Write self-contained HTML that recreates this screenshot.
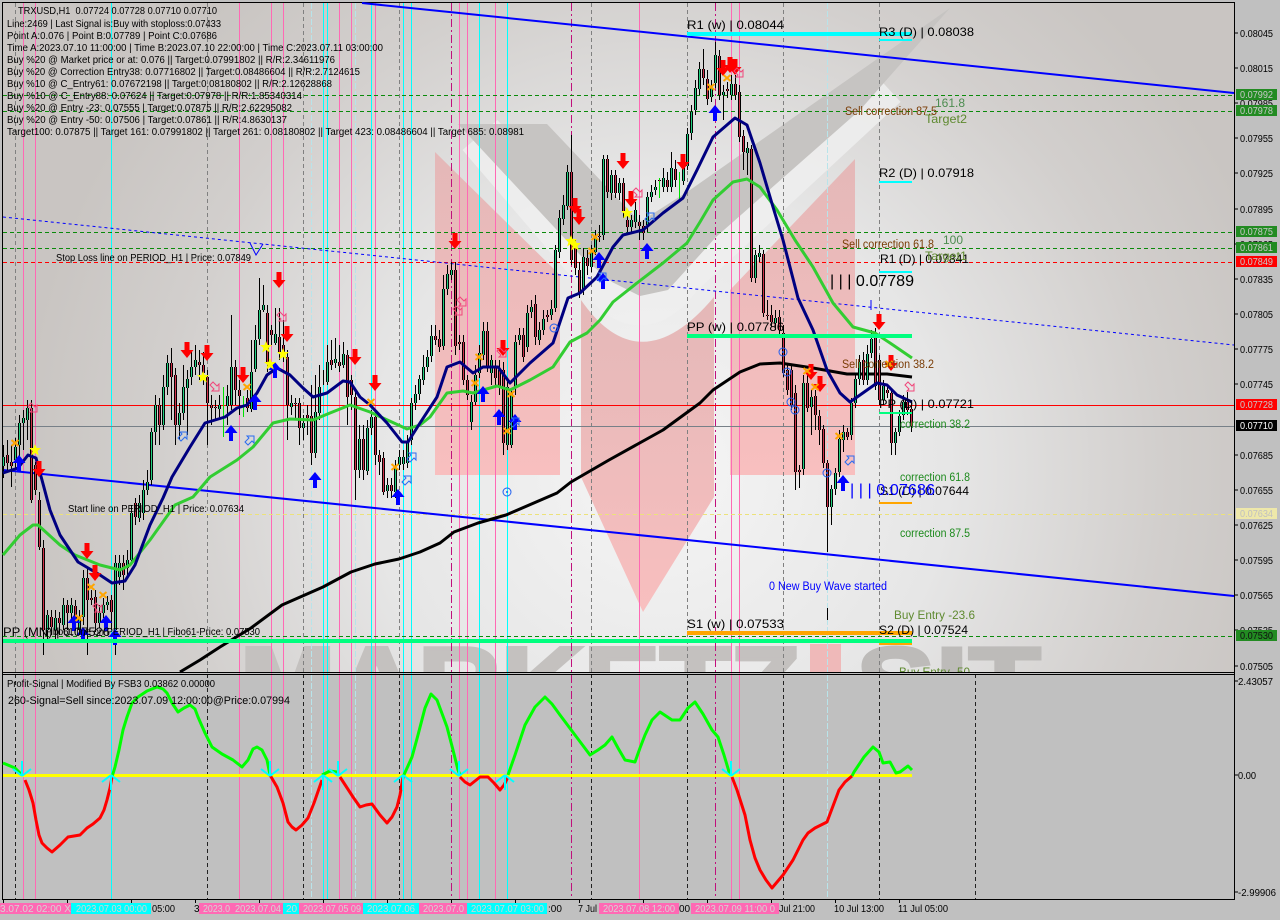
<!DOCTYPE html>
<html>
<head>
<meta charset="utf-8">
<title>TRXUSD,H1</title>
<style>
html,body{margin:0;padding:0;background:#c0c0c0;width:1280px;height:920px;overflow:hidden}
svg{display:block;font-family:"Liberation Sans",sans-serif}
text{white-space:pre}
</style>
</head>
<body>
<svg width="1280" height="920" viewBox="0 0 1280 920" xmlns="http://www.w3.org/2000/svg">
<defs>
<radialGradient id="bg" gradientUnits="userSpaceOnUse" cx="660" cy="470" r="640">
<stop offset="0" stop-color="#f5f5f5"/><stop offset=".45" stop-color="#e6e6e6"/><stop offset=".78" stop-color="#d2cfcd"/><stop offset="1" stop-color="#c9c5c2"/>
</radialGradient>
<linearGradient id="pk" x1="0" y1="0" x2="0" y2="1"><stop offset="0" stop-color="#e4b8b8"/><stop offset="1" stop-color="#f8bfbf"/></linearGradient>
<clipPath id="m"><rect x="3" y="3" width="1231" height="669"/></clipPath>
<polygon id="rd" points="-2.5,-8 2.5,-8 2.5,0 6.5,0 0,8 -6.5,0 -2.5,0" fill="#f00"/>
<polygon id="bu" points="-2,8 2,8 2,0 6.5,0 0,-8 -6.5,0 -2,0" fill="#00f"/>
<polygon id="st" points="0,-6 1.6,-2 6,-2 2.5,1 3.8,5.5 0,3 -3.8,5.5 -2.5,1 -6,-2 -1.6,-2" fill="#ff0"/>
<path id="ox" d="M-3.5 -3L3.5 3M3.5 -3L-3.5 3" stroke="#ffa500" stroke-width="2" fill="none"/>
<polygon id="hp" points="-5,-2 -2,-5 2,-1 4,-3 4,4 -3,4 -1,2" fill="none" stroke="#f0467a"/>
<polygon id="hb" points="-5,2 -2,5 2,1 4,3 4,-4 -3,-4 -1,-2" fill="none" stroke="#2a6cf0"/>
<g id="ci"><circle r="4" fill="none" stroke="#1f5ff0"/><circle r="1" fill="#1f5ff0"/></g>
<path id="cd" d="M0 0V-15M0 0L-9 -7M0 0L9 -7" stroke="#00ffff" stroke-width="2" fill="none"/>
<path id="cu" d="M0 0V15M0 0L-9 7M0 0L9 7" stroke="#00ffff" stroke-width="2" fill="none"/>
<path id="gb" fill="none" d="M3 457V466M15 447V460M19 423V445M23 418V423M27 408V420M47 615V630M55 618V630M63 605V625M71 605V613M79 617V630M83 578V617M99 613V623M103 605V613M107 602V605M115 563V630M119 563V577M127 560V568M131 513V560M139 503V518M143 490V513M147 482V490M151 432V480M155 405V432M163 387V425M167 363V387M179 413V425M183 387V413M187 379V388M191 367V377M195 360V367M219 405V409M227 396V406M231 367V405M251 372V409M255 340V369M259 310V339M263 305V310M275 334V343M291 403V407M303 423V428M315 412V453M319 387V413M327 362V382M335 359V363M343 354V365M359 439V470M367 428V471M371 417V428M387 485V491M395 468V492M399 457V465M403 457V464M407 443V463M411 403V440M415 394V403M419 379V394M423 367V380M427 357V367M431 336V356M443 289V346M447 274V289M451 270V275M471 402V422M475 375V402M479 353V373M483 331V355M491 360V373M507 387V445M511 393V445M515 342V387M519 335V340M527 313V347M531 307V312M539 330V340M543 319V330M551 309V315M555 250V308M559 218V252M563 205V219M567 172V206M583 257V290M591 252V267M595 237V252M603 159V235M611 175V193M619 183V193M631 220V227M635 210V222M647 197V225M651 192V197M655 187V190M663 178V187M671 168V187M683 167V181M687 134V166M691 112V133M695 88V110M699 69V89M711 88V97M715 55V83M723 92V95M731 84V95M747 148V153M755 255V278M759 253V257M775 318V323M803 383V469M811 397V407M831 489V507M835 473V489M839 439V472M843 432V440M851 403V435M855 379V403M859 362V379M867 354V380M871 339V353M883 386V400M895 432V443M899 416V432M903 402V415"/>
<path id="rb" fill="none" d="M7 455V463M11 462V466M31 408V500M35 465V490M39 500V547M43 548V630M51 617V627M59 618V623M67 605V613M75 606V620M87 578V600M91 598V600M95 597V623M111 600V612M123 563V575M135 503V517M159 405V425M171 363V377M175 375V425M199 362V365M203 365V373M207 377V403M211 405V408M215 407V408M235 367V390M239 390V396M247 398V408M267 313V363M271 330V335M279 337V352M283 345V355M287 357V405M295 403V404M299 403V428M307 415V418M311 416V453M331 360V365M339 362V366M347 355V397M351 380V395M355 397V470M363 439V470M375 417V455M379 455V462M383 458V492M391 485V491M435 336V340M439 339V347M455 270V346M459 342V344M463 342V380M467 380V395M487 331V367M495 368V378M499 370V387M503 370V443M523 335V357M535 304V337M547 315V317M571 172V260M575 247V268M579 270V293M587 258V266M599 236V237M607 159V192M615 175V193M623 183V212M627 220V227M639 222V226M643 226V233M659 180V181M667 180V187M675 169V180M703 69V78M707 79V99M719 56V95M727 89V91M735 84V95M739 92V137M743 136V152M751 149V278M763 254V313M767 315V316M771 315V322M779 317V330M783 333V373M787 370V390M791 370V405M795 393V472M799 470V472M807 383V408M815 396V415M819 416V430M823 429V463M827 463V507M847 432V437M863 360V380M875 338V386M879 360V400M887 390V393M891 393V443M907 402V410M911 409V426"/>
</defs>

<rect width="1280" height="920" fill="#c0c0c0"/>
<rect x="3" y="3" width="1231" height="669" fill="url(#bg)"/>

<!-- watermark -->
<g clip-path="url(#m)">
<path d="M480 135L600 275Q640 330 680 275L885 85" fill="none" stroke="#efefef" stroke-width="46" opacity=".85"/>
<polygon points="458,124 547,124 640,222 690,190 950,8 860,110 716,237 668,290 640,296 612,282 582,257" fill="#c6c4c2"/>
<polygon points="435,152 560,275 560,475 435,475" fill="url(#pk)"/>
<polygon points="855,159 730,290 730,475 855,475" fill="url(#pk)"/>
<path d="M581 300Q640 385 714 297V497L643 612L581 477Z" fill="url(#pk)"/>
<text x="240" y="717" font-size="100" font-weight="bold" fill="#c4c1bf" stroke="#c4c1bf" stroke-width="4" textLength="560" lengthAdjust="spacingAndGlyphs">MARKETZ</text>
<rect x="810" y="644" width="31" height="30" fill="#efb9b9"/>
<text x="856" y="717" font-size="100" fill="#bdbbb9" stroke="#bdbbb9" stroke-width="3" font-weight="bold" textLength="185" lengthAdjust="spacingAndGlyphs">SIT</text>
</g>

<!-- panel -->
<rect x="3" y="674" width="1231" height="225" fill="#c0c0c0"/>

<!-- vertical lines -->
<g shape-rendering="crispEdges" fill="none">
<path stroke="#808080" stroke-dasharray="4 3" d="M15.5 3V672M207.5 3V672M303.5 3V672M399.5 3V672M591.5 3V672M687.5 3V672M783.5 3V672M879.5 3V672"/>
<path stroke="#222" stroke-dasharray="4 3" d="M15.5 674V899M207.5 674V899M303.5 674V899M399.5 674V899M591.5 674V899M687.5 674V899M783.5 674V899M879.5 674V899M975.5 674V899"/>
<path stroke="#b8e4ea" stroke-dasharray="6 2" d="M311.5 3V899M355.5 3V899M827.5 3V899"/>
<path stroke="#c0107c" stroke-dasharray="8 3 2 3" d="M451.5 3V899M571.5 3V899M715.5 3V899"/>
<path stroke="#ff69b4" d="M23.5 3V899M35.5 3V899M239.5 3V899M271.5 3V899M283.5 3V899M339.5 3V899M351.5 3V899M375.5 3V899M459.5 3V899M467.5 3V899M495.5 3V899M639.5 3V899M731.5 3V899M739.5 3V899"/>
<path stroke="#00ffff" d="M111.5 3V899M323.5 3V899M327.5 3V899M371.5 3V899M403.5 3V899M411.5 3V899M479.5 3V899M507.5 3V899"/>
</g>

<!-- frames -->
<g shape-rendering="crispEdges">
<rect x="2" y="2" width="1233" height="1" fill="#000"/>
<rect x="2" y="2" width="1" height="897" fill="#000"/>
<rect x="1234" y="2" width="1" height="898" fill="#000"/>
<rect x="2" y="672" width="1233" height="1" fill="#000"/>
<rect x="2" y="674" width="1233" height="1" fill="#000"/>
<rect x="2" y="899" width="1233" height="1" fill="#000"/>
</g>

<!-- horizontal lines -->
<g shape-rendering="crispEdges" fill="none">
<path stroke="#0a8a0a" stroke-dasharray="4 3" d="M3 95.5H1234M3 111.5H1234M3 232.5H1234M3 248.5H1234M3 636.5H1234"/>
<path stroke="#f00" stroke-dasharray="4 3" d="M3 262.5H1234"/>
<path stroke="#f00" d="M3 405.5H1234"/>
<path stroke="#778088" d="M3 426.5H1234"/>
<path stroke="#ece27a" stroke-dasharray="4 3" d="M3 514.5H1234"/>
</g>

<!-- channels -->
<g fill="none" stroke="#0000ff">
<path stroke-width="2" d="M362 3L1234 93"/>
<path stroke-width="2" d="M3 470L1234 596"/>
<path stroke-width="1" stroke-dasharray="3 3" d="M3 217L1234 345"/>
<path stroke-width="1" d="M250 243L256 255L263 244M871 300V310"/>
</g>

<!-- black MA -->
<path fill="none" stroke="#000" stroke-width="3" stroke-linejoin="round" d="M180 672L200 660L220 647L251 628L282 605L323 587L351 572L375 564L399 559L420 552L440 543L454 532L478 523L506 515L557 493L571 482L609 460L663 430L700 403L713 390L740 372L760 364L780 363L813 368L847 374L887 374L912 377"/>

<!-- candles -->
<g fill="none" shape-rendering="crispEdges">
<path stroke="#000" d="M3.5 445V478M7.5 440V470M11.5 445V487M15.5 438V470M19.5 415V465M23.5 410V450M27.5 400V440M31.5 400V503M35.5 462V495M39.5 492V550M43.5 540V655M47.5 610V640M51.5 610V635M55.5 610V640M59.5 612V635M63.5 598V630M67.5 600V630M71.5 598V620M75.5 600V630M79.5 610V632M83.5 570V625M87.5 568V655M91.5 590V605M95.5 590V632M99.5 605V628M103.5 598V618M107.5 596V610M111.5 595V630M115.5 555V655M119.5 555V585M123.5 555V590M127.5 550V575M131.5 505V565M135.5 498V525M139.5 495V522M143.5 480V520M147.5 470V495M151.5 428V485M155.5 395V445M159.5 398V445M163.5 375V430M167.5 355V395M171.5 348V420M175.5 368V445M179.5 403V440M183.5 365V420M187.5 370V435M191.5 352V385M195.5 345V375M199.5 350V380M203.5 352V385M207.5 370V445M211.5 395V425M215.5 400V420M219.5 395V420M227.5 385V425M231.5 315V410M235.5 360V405M239.5 380V415M247.5 390V412M251.5 340V412M255.5 325V372M259.5 278V345M263.5 285V312M267.5 305V372M271.5 325V345M275.5 308V345M279.5 308V360M283.5 320V362M287.5 350V440M291.5 395V415M295.5 398V420M299.5 398V445M303.5 415V440M307.5 405V435M311.5 385V465M315.5 375V458M319.5 365V420M323.5 370V385M327.5 345V385M331.5 340V370M335.5 338V368M339.5 345V372M343.5 342V368M347.5 350V425M351.5 375V410M355.5 390V500M359.5 425V478M363.5 425V480M367.5 420V475M371.5 410V435M375.5 410V465M379.5 450V475M383.5 452V495M387.5 478V498M391.5 478V498M395.5 460V498M399.5 450V470M403.5 450V470M407.5 435V468M411.5 398V445M415.5 385V410M419.5 375V400M423.5 355V385M427.5 350V372M431.5 325V362M435.5 325V345M439.5 330V352M443.5 275V350M447.5 265V295M451.5 262V280M455.5 262V355M459.5 335V350M463.5 335V385M467.5 375V400M471.5 395V430M475.5 365V405M479.5 345V378M483.5 322V360M487.5 322V372M491.5 355V385M495.5 360V385M499.5 360V395M503.5 362V455M507.5 380V450M511.5 388V448M515.5 335V395M519.5 328V345M523.5 328V362M527.5 305V352M531.5 300V318M535.5 295V345M539.5 322V345M543.5 310V335M547.5 310V322M551.5 300V320M555.5 245V312M559.5 210V258M563.5 195V225M567.5 165V210M571.5 135V265M575.5 240V275M579.5 262V298M583.5 248V295M587.5 250V275M591.5 245V272M595.5 230V255M599.5 225V242M603.5 155V240M607.5 155V198M611.5 170V200M615.5 170V198M619.5 178V200M623.5 178V218M627.5 212V232M631.5 215V232M635.5 202V228M639.5 215V240M643.5 220V240M647.5 192V232M651.5 185V202M655.5 180V195M663.5 168V192M667.5 172V192M671.5 152V192M675.5 160V187M683.5 160V185M687.5 128V170M691.5 105V140M695.5 80V115M699.5 62V95M703.5 49V85M707.5 70V105M711.5 80V102M715.5 42V88M719.5 50V100M723.5 85V120M727.5 82V98M731.5 75V100M735.5 75V100M739.5 85V142M743.5 130V170M747.5 142V175M751.5 145V282M755.5 250V283M759.5 245V262M763.5 250V317M767.5 300V320M771.5 305V327M775.5 310V330M779.5 310V335M783.5 325V377M787.5 365V395M791.5 365V410M795.5 385V490M799.5 465V488M803.5 375V475M807.5 375V412M811.5 390V435M815.5 390V430M819.5 410V445M823.5 425V468M827.5 460V552M831.5 485V525M835.5 468V495M839.5 430V477M843.5 425V452M847.5 428V440M851.5 398V440M855.5 375V408M859.5 355V385M863.5 352V385M867.5 345V385M871.5 330V358M875.5 328V390M879.5 355V405M883.5 380V405M887.5 385V398M891.5 388V455M895.5 428V455M899.5 410V436M903.5 395V420M907.5 392V415M911.5 400V432M827.5 608V620"/>
<path stroke="#00e000" d="M223.5 387V437M243.5 396V417M659.5 178V198M679.5 172V200"/>
<use href="#gb" stroke="#000" stroke-width="3" transform="translate(.5 0)"/>
<use href="#rb" stroke="#000" stroke-width="3" transform="translate(.5 0)"/>
<use href="#gb" stroke="#20d080" stroke-width="1" transform="translate(.5 0)"/>
<use href="#rb" stroke="#d0304a" stroke-width="1" transform="translate(.5 0)"/>
</g>

<!-- MAs -->
<path fill="none" stroke="#32cd32" stroke-width="3" stroke-linejoin="round" d="M3 555L20 535L33 525L38 525L60 545L75 555L100 565L120 570L130 565L150 540L175 505L193 497L210 477L237 460L253 447L273 423L290 419L313 420L330 413L350 405L370 412L383 418L407 429L420 425L430 417L447 393L463 391L473 393L497 386L510 390L530 380L553 367L570 342L587 333L600 320L613 302L637 283L663 263L687 243L700 222L713 200L733 182L747 179L760 187L777 210L795 240L813 267L833 303L853 327L875 333L893 345L912 358"/>
<path fill="none" stroke="#000080" stroke-width="3" stroke-linejoin="round" d="M3 473L18 468L28 455L36 458L42 480L50 510L60 535L78 562L100 575L112 583L125 581L135 565L150 525L163 498L172 477L190 447L205 423L225 417L237 408L247 405L257 393L267 375L277 368L290 375L303 388L313 397L327 393L343 381L350 382L360 397L370 405L387 423L402 442L408 442L420 423L437 397L447 367L460 362L473 373L483 367L498 367L510 383L530 363L553 343L568 298L580 293L597 277L613 247L623 235L643 230L663 213L683 198L697 170L713 137L735 118L747 125L760 163L773 207L783 240L798 298L813 330L827 370L840 393L850 402L860 395L877 383L887 385L897 395L912 402"/>

<!-- markers -->
<g>
<use href="#rd" x="39" y="469"/><use href="#rd" x="87" y="551"/><use href="#rd" x="95" y="573"/><use href="#rd" x="187" y="350"/><use href="#rd" x="207" y="353"/><use href="#rd" x="243" y="375"/><use href="#rd" x="279" y="280"/><use href="#rd" x="287" y="334"/><use href="#rd" x="355" y="357"/><use href="#rd" x="375" y="383"/><use href="#rd" x="455" y="241"/><use href="#rd" x="503" y="348"/><use href="#rd" x="575" y="206"/><use href="#rd" x="579" y="217"/><use href="#rd" x="623" y="161"/><use href="#rd" x="631" y="199"/><use href="#rd" x="683" y="162"/><use href="#rd" x="723" y="68"/><use href="#rd" x="730" y="65"/><use href="#rd" x="735" y="67"/><use href="#rd" x="811" y="372"/><use href="#rd" x="820" y="384"/><use href="#rd" x="879" y="322"/><use href="#rd" x="891" y="363"/>
<use href="#bu" x="19" y="463"/><use href="#bu" x="74" y="623"/><use href="#bu" x="83" y="635"/><use href="#bu" x="106" y="623"/><use href="#bu" x="115" y="637"/><use href="#bu" x="231" y="433"/><use href="#bu" x="255" y="402"/><use href="#bu" x="275" y="370"/><use href="#bu" x="315" y="480"/><use href="#bu" x="398" y="497"/><use href="#bu" x="483" y="394"/><use href="#bu" x="499" y="417"/><use href="#bu" x="515" y="422"/><use href="#bu" x="599" y="260"/><use href="#bu" x="603" y="281"/><use href="#bu" x="647" y="251"/><use href="#bu" x="715" y="113"/><use href="#bu" x="843" y="483"/>
<use href="#st" x="35" y="450"/><use href="#st" x="203" y="377"/><use href="#st" x="266" y="347"/><use href="#st" x="270" y="364"/><use href="#st" x="283" y="354"/><use href="#st" x="571" y="241"/><use href="#st" x="575" y="245"/><use href="#st" x="627" y="213"/>
<use href="#ox" x="15" y="443"/><use href="#ox" x="91" y="587"/><use href="#ox" x="103" y="595"/><use href="#ox" x="79" y="618"/><use href="#ox" x="247" y="387"/><use href="#ox" x="371" y="402"/><use href="#ox" x="395" y="467"/><use href="#ox" x="479" y="357"/><use href="#ox" x="475" y="383"/><use href="#ox" x="511" y="394"/><use href="#ox" x="507" y="431"/><use href="#ox" x="595" y="237"/><use href="#ox" x="592" y="251"/><use href="#ox" x="711" y="87"/><use href="#ox" x="727" y="78"/><use href="#ox" x="807" y="371"/><use href="#ox" x="815" y="387"/><use href="#ox" x="839" y="436"/><use href="#ox" x="889" y="364"/>
<use href="#hp" x="33" y="408"/><use href="#hp" x="98" y="608"/><use href="#hp" x="215" y="387"/><use href="#hp" x="282" y="317"/><use href="#hp" x="462" y="302"/><use href="#hp" x="458" y="311"/><use href="#hp" x="502" y="353"/><use href="#hp" x="638" y="193"/><use href="#hp" x="739" y="73"/><use href="#hp" x="910" y="387"/>
<use href="#hb" x="183" y="436"/><use href="#hb" x="250" y="440"/><use href="#hb" x="407" y="480"/><use href="#hb" x="412" y="457"/><use href="#hb" x="650" y="217"/><use href="#hb" x="602" y="277"/><use href="#hb" x="515" y="422"/><use href="#hb" x="850" y="460"/>
<use href="#ci" x="554" y="328"/><use href="#ci" x="783" y="352"/><use href="#ci" x="787" y="372"/><use href="#ci" x="791" y="402"/><use href="#ci" x="795" y="410"/><use href="#ci" x="827" y="473"/><use href="#ci" x="507" y="492"/>
</g>

<!-- level bars -->
<g shape-rendering="crispEdges">
<rect x="687" y="32" width="225" height="4" fill="#00ffff"/>
<rect x="879" y="39" width="33" height="2" fill="#00ffff"/>
<rect x="879" y="181" width="33" height="2" fill="#00ffff"/>
<rect x="879" y="271" width="33" height="2" fill="#00ffff"/>
<rect x="687" y="334" width="225" height="4" fill="#00ff7f"/>
<rect x="879" y="412" width="33" height="2" fill="#00ff7f"/>
<rect x="879" y="502" width="33" height="2" fill="#ffa500"/>
<rect x="687" y="631" width="225" height="4" fill="#ffa500"/>
<rect x="879" y="643" width="33" height="2" fill="#ffa500"/>
<rect x="3" y="639" width="909" height="4" fill="#00ff7f"/>
</g>

<!-- top info text -->
<g font-size="10" fill="#000">
<text x="18" y="14" textLength="199" lengthAdjust="spacingAndGlyphs">TRXUSD,H1  0.07724 0.07728 0.07710 0.07710</text>
<text x="7" y="27" textLength="214" lengthAdjust="spacingAndGlyphs">Line:2469 | Last Signal is:Buy with stoploss:0.07433</text>
<text x="7" y="39" textLength="210" lengthAdjust="spacingAndGlyphs">Point A:0.076 | Point B:0.07789 | Point C:0.07686</text>
<text x="7" y="51" textLength="376" lengthAdjust="spacingAndGlyphs">Time A:2023.07.10 11:00:00 | Time B:2023.07.10 22:00:00 | Time C:2023.07.11 03:00:00</text>
<text x="7" y="63" textLength="328" lengthAdjust="spacingAndGlyphs">Buy %20 @ Market price or at: 0.076 || Target:0.07991802 || R/R:2.34611976</text>
<text x="7" y="75" textLength="353" lengthAdjust="spacingAndGlyphs">Buy %20 @ Correction Entry38: 0.07716802 || Target:0.08486604 || R/R:2.7124615</text>
<text x="7" y="87" textLength="325" lengthAdjust="spacingAndGlyphs">Buy %10 @ C_Entry61: 0.07672198 || Target:0.08180802 || R/R:2.12628868</text>
<text x="7" y="99" textLength="295" lengthAdjust="spacingAndGlyphs">Buy %10 @ C_Entry88: 0.07624 || Target:0.07978 || R/R:1.85340314</text>
<text x="7" y="111" textLength="285" lengthAdjust="spacingAndGlyphs">Buy %20 @ Entry -23: 0.07555 | Target:0.07875 || R/R:2.62295082</text>
<text x="7" y="123" textLength="280" lengthAdjust="spacingAndGlyphs">Buy %20 @ Entry -50: 0.07506 | Target:0.07861 || R/R:4.8630137</text>
<text x="7" y="135" textLength="517" lengthAdjust="spacingAndGlyphs">Target100: 0.07875 || Target 161: 0.07991802 || Target 261: 0.08180802 || Target 423: 0.08486604 || Target 685: 0.08981</text>
<text x="56" y="261" textLength="195" lengthAdjust="spacingAndGlyphs">Stop Loss line on PERIOD_H1 | Price: 0.07849</text>
<text x="68" y="512" textLength="176" lengthAdjust="spacingAndGlyphs">Start line on PERIOD_H1 | Price: 0.07634</text>
<text x="45" y="635" textLength="215" lengthAdjust="spacingAndGlyphs">Fibo61 line on PERIOD_H1 | Fibo61-Price: 0.07530</text>
</g>

<!-- chart labels -->
<g clip-path="url(#m)">
<g font-size="12" fill="#000">
<text x="3" y="636" textLength="107" lengthAdjust="spacingAndGlyphs">PP (MN) | 0.07526</text>
<text x="687" y="29" textLength="97" lengthAdjust="spacingAndGlyphs">R1 (w) | 0.08044</text>
<text x="879" y="36" textLength="95" lengthAdjust="spacingAndGlyphs">R3 (D) | 0.08038</text>
<text x="879" y="177" textLength="95" lengthAdjust="spacingAndGlyphs">R2 (D) | 0.07918</text>
<text x="880" y="263" textLength="89" lengthAdjust="spacingAndGlyphs">R1 (D) | 0.07841</text>
<text x="687" y="331" textLength="97" lengthAdjust="spacingAndGlyphs">PP (w) | 0.07786</text>
<text x="879" y="408" textLength="95" lengthAdjust="spacingAndGlyphs">PP (D) | 0.07721</text>
<text x="880" y="495" textLength="89" lengthAdjust="spacingAndGlyphs">S1 (D) | 0.07644</text>
<text x="687" y="628" textLength="97" lengthAdjust="spacingAndGlyphs">S1 (w) | 0.07533</text>
<text x="879" y="634" textLength="89" lengthAdjust="spacingAndGlyphs">S2 (D) | 0.07524</text>
</g>
<text x="830" y="286" font-size="16" fill="#000" textLength="84" lengthAdjust="spacingAndGlyphs">| | | 0.07789</text>
<text x="850" y="495" font-size="16" fill="#0000ff" textLength="85" lengthAdjust="spacingAndGlyphs">| | | 0.07686</text>
<g font-size="11.5" fill="#7a3c05">
<text x="845" y="115" textLength="92" lengthAdjust="spacingAndGlyphs">Sell correction 87.5</text>
<text x="842" y="248" textLength="92" lengthAdjust="spacingAndGlyphs">Sell correction 61.8</text>
<text x="842" y="368" textLength="92" lengthAdjust="spacingAndGlyphs">Sell correction 38.2</text>
</g>
<g font-size="12" fill="#4c8c50">
<text x="935" y="107" textLength="30" lengthAdjust="spacingAndGlyphs">161.8</text>
<text x="943" y="244" textLength="20" lengthAdjust="spacingAndGlyphs">100</text>
</g>
<g font-size="12" fill="#5f8a30">
<text x="925" y="123" textLength="42" lengthAdjust="spacingAndGlyphs">Target2</text>
<text x="925" y="260" textLength="42" lengthAdjust="spacingAndGlyphs">Target1</text>
<text x="894" y="619" textLength="81" lengthAdjust="spacingAndGlyphs">Buy Entry -23.6</text>
<text x="899" y="676" textLength="71" lengthAdjust="spacingAndGlyphs">Buy Entry -50</text>
</g>
<g font-size="11.5" fill="#1d8a1d">
<text x="900" y="428" textLength="70" lengthAdjust="spacingAndGlyphs">correction 38.2</text>
<text x="900" y="481" textLength="70" lengthAdjust="spacingAndGlyphs">correction 61.8</text>
<text x="900" y="537" textLength="70" lengthAdjust="spacingAndGlyphs">correction 87.5</text>
</g>
<text x="769" y="590" font-size="11.5" fill="#0000ff" textLength="118" lengthAdjust="spacingAndGlyphs">0 New Buy Wave started</text>
</g>

<!-- indicator -->
<rect x="3" y="774" width="909" height="3" fill="#ffff00"/>
<g fill="none" stroke-width="3" stroke-linejoin="round">
<g stroke="#00ff00">
<path d="M3 763L15 768L22 775"/>
<path d="M112 777L115 767L119 750L123 730L127 717L132 703L138 697L147 691L157 687L163 689L167 693L172 703L178 712L184 708L190 705L195 709L198 717L205 733L212 747L222 754L233 760L242 767L248 760L253 749L257 747L262 750L267 760L270 775"/>
<path d="M322 775L330 771L337 772"/>
<path d="M403 777L412 757L418 735L425 708L431 694L437 700L447 727L453 750L458 770L460 775"/>
<path d="M508 775L515 755L525 725L535 707L545 697L552 704L560 715L575 735L590 755L598 750L605 745L612 737L618 748L625 760L635 762L640 748L645 735L652 720L660 712L672 720L680 720L688 708L695 702L703 714L712 730L718 737L724 755L730 775"/>
<path d="M852 776L854 772L864 757L873 747L879 752L883 763L890 762L896 773L900 772L908 766L912 770"/>
</g>
<g stroke="#ff0000">
<path d="M25 780L29 790L33 803L36 820L39 835L42 843L47 848L52 852L60 845L68 837L74 836L80 835L87 828L93 824L100 818L104 810L107 800L110 788L112 777"/>
<path d="M270 775L277 787L283 803L288 822L292 827L296 830L302 825L308 818L314 803L322 780"/>
<path d="M340 777L353 797L360 807L366 805L372 804L380 815L387 823L392 817L397 807L400 795L403 777"/>
<path d="M460 777L465 782L470 785L475 781L480 777L488 777L494 783L500 790L504 785L508 777"/>
<path d="M732 777L737 790L745 815L750 840L755 858L760 870L766 880L772 888L783 875L793 860L798 850L803 840L808 833L815 828L827 822L833 806L839 790L845 782L852 776"/>
</g>
</g>
<use href="#cd" x="22" y="776"/><use href="#cu" x="111" y="775"/><use href="#cd" x="270" y="776"/><use href="#cu" x="323" y="775"/><use href="#cd" x="338" y="776"/><use href="#cu" x="403" y="775"/><use href="#cd" x="459" y="776"/><use href="#cu" x="505" y="775"/><use href="#cd" x="731" y="776"/>
<text x="7" y="687" font-size="10" fill="#000" textLength="208" lengthAdjust="spacingAndGlyphs">Profit-Signal | Modified By FSB3 0.03862 0.00000</text>
<text x="8" y="704" font-size="11" fill="#000" textLength="282" lengthAdjust="spacingAndGlyphs">260-Signal=Sell since:2023.07.09 12:00:00@Price:0.07994</text>

<!-- right axis -->
<g shape-rendering="crispEdges" stroke="#000" fill="none">
<path d="M1234 33H1238M1234 68H1238M1234 103H1238M1234 138H1238M1234 173H1238M1234 209H1238M1234 244H1238M1234 279H1238M1234 314H1238M1234 349H1238M1234 384H1238M1234 455H1238M1234 490H1238M1234 525H1238M1234 560H1238M1234 595H1238M1234 630H1238M1234 666H1238M1234 681H1238M1234 775H1238M1234 892H1238"/>
</g>
<g font-size="10" fill="#000">
<text x="1240" y="37" textLength="33" lengthAdjust="spacingAndGlyphs">0.08045</text>
<text x="1240" y="72" textLength="33" lengthAdjust="spacingAndGlyphs">0.08015</text>
<text x="1240" y="107" textLength="33" lengthAdjust="spacingAndGlyphs">0.07985</text>
<text x="1240" y="142" textLength="33" lengthAdjust="spacingAndGlyphs">0.07955</text>
<text x="1240" y="177" textLength="33" lengthAdjust="spacingAndGlyphs">0.07925</text>
<text x="1240" y="213" textLength="33" lengthAdjust="spacingAndGlyphs">0.07895</text>
<text x="1240" y="248" textLength="33" lengthAdjust="spacingAndGlyphs">0.07865</text>
<text x="1240" y="283" textLength="33" lengthAdjust="spacingAndGlyphs">0.07835</text>
<text x="1240" y="318" textLength="33" lengthAdjust="spacingAndGlyphs">0.07805</text>
<text x="1240" y="353" textLength="33" lengthAdjust="spacingAndGlyphs">0.07775</text>
<text x="1240" y="388" textLength="33" lengthAdjust="spacingAndGlyphs">0.07745</text>
<text x="1240" y="459" textLength="33" lengthAdjust="spacingAndGlyphs">0.07685</text>
<text x="1240" y="494" textLength="33" lengthAdjust="spacingAndGlyphs">0.07655</text>
<text x="1240" y="529" textLength="33" lengthAdjust="spacingAndGlyphs">0.07625</text>
<text x="1240" y="564" textLength="33" lengthAdjust="spacingAndGlyphs">0.07595</text>
<text x="1240" y="599" textLength="33" lengthAdjust="spacingAndGlyphs">0.07565</text>
<text x="1240" y="634" textLength="33" lengthAdjust="spacingAndGlyphs">0.07535</text>
<text x="1240" y="670" textLength="33" lengthAdjust="spacingAndGlyphs">0.07505</text>
<text x="1238" y="685" textLength="35" lengthAdjust="spacingAndGlyphs">2.43057</text>
<text x="1238" y="779" textLength="18" lengthAdjust="spacingAndGlyphs">0.00</text>
<text x="1238" y="896" textLength="38" lengthAdjust="spacingAndGlyphs">-2.99906</text>
</g>
<g shape-rendering="crispEdges">
<rect x="1236" y="89" width="41" height="11" fill="#228b22"/>
<rect x="1236" y="105" width="41" height="11" fill="#228b22"/>
<rect x="1236" y="226" width="41" height="11" fill="#228b22"/>
<rect x="1236" y="242" width="41" height="11" fill="#228b22"/>
<rect x="1236" y="256" width="41" height="11" fill="#ff0000"/>
<rect x="1236" y="399" width="41" height="11" fill="#ff0000"/>
<rect x="1236" y="420" width="41" height="11" fill="#000"/>
<rect x="1236" y="508" width="41" height="11" fill="#eee8aa"/>
<rect x="1236" y="630" width="41" height="11" fill="#228b22"/>
</g>
<g font-size="10" fill="#c8c8c8">
<text x="1240" y="98" textLength="33" lengthAdjust="spacingAndGlyphs">0.07992</text>
<text x="1240" y="114" textLength="33" lengthAdjust="spacingAndGlyphs">0.07978</text>
<text x="1240" y="235" textLength="33" lengthAdjust="spacingAndGlyphs">0.07875</text>
<text x="1240" y="251" textLength="33" lengthAdjust="spacingAndGlyphs">0.07861</text>
<text x="1240" y="265" textLength="33" lengthAdjust="spacingAndGlyphs">0.07849</text>
<text x="1240" y="408" textLength="33" lengthAdjust="spacingAndGlyphs">0.07728</text>
<text x="1240" y="429" fill="#fff" textLength="33" lengthAdjust="spacingAndGlyphs">0.07710</text>
<text x="1240" y="517" fill="#c0c0c0" textLength="33" lengthAdjust="spacingAndGlyphs">0.07634</text>
<text x="1240" y="639" fill="#111" textLength="33" lengthAdjust="spacingAndGlyphs">0.07530</text>
</g>

<!-- bottom axis -->
<g shape-rendering="crispEdges">
<path stroke="#000" d="M3.5 899V903M67.5 899V903M131.5 899V903M195.5 899V903M259.5 899V903M323.5 899V903M387.5 899V903M451.5 899V903M515.5 899V903M579.5 899V903M643.5 899V903M707.5 899V903M771.5 899V903M835.5 899V903M899.5 899V903"/>
<rect x="0" y="903" width="71" height="11" fill="#ff69b4"/>
<rect x="71" y="903" width="80" height="11" fill="#00ffff"/>
<rect x="199" y="903" width="84" height="11" fill="#ff69b4"/>
<rect x="283" y="903" width="16" height="11" fill="#00ffff"/>
<rect x="299" y="903" width="64" height="11" fill="#ff69b4"/>
<rect x="363" y="903" width="56" height="11" fill="#00ffff"/>
<rect x="419" y="903" width="48" height="11" fill="#ff69b4"/>
<rect x="467" y="903" width="80" height="11" fill="#00ffff"/>
<rect x="599" y="903" width="80" height="11" fill="#ff69b4"/>
<rect x="691" y="903" width="88" height="11" fill="#ff69b4"/>
</g>
<g font-size="10" fill="#d4d4d4">
<text x="0" y="912" textLength="71" lengthAdjust="spacingAndGlyphs">3.07.02 02:00 X</text>
<text x="76" y="912" textLength="71" lengthAdjust="spacingAndGlyphs">2023.07.03 00:00</text>
<text x="203" y="912" textLength="27" lengthAdjust="spacingAndGlyphs">2023.0</text>
<text x="235" y="912" textLength="46" lengthAdjust="spacingAndGlyphs">2023.07.04</text>
<text x="286" y="912">20</text>
<text x="303" y="912" textLength="58" lengthAdjust="spacingAndGlyphs">2023.07.05 09</text>
<text x="367" y="912" textLength="48" lengthAdjust="spacingAndGlyphs">2023.07.06</text>
<text x="423" y="912" textLength="41" lengthAdjust="spacingAndGlyphs">2023.07.0</text>
<text x="471" y="912" textLength="73" lengthAdjust="spacingAndGlyphs">2023.07.07 03:00</text>
<text x="603" y="912" textLength="72" lengthAdjust="spacingAndGlyphs">2023.07.08 12:00</text>
<text x="695" y="912" textLength="80" lengthAdjust="spacingAndGlyphs">2023.07.09 11:00 0</text>
</g>
<g font-size="10" fill="#000">
<text x="152" y="912" textLength="23" lengthAdjust="spacingAndGlyphs">05:00</text>
<text x="194" y="912">3</text>
<text x="548" y="912">:00</text>
<text x="578" y="912" textLength="19" lengthAdjust="spacingAndGlyphs">7 Jul</text>
<text x="679" y="912">00</text>
<text x="779" y="912" textLength="36" lengthAdjust="spacingAndGlyphs">Jul 21:00</text>
<text x="834" y="912" textLength="50" lengthAdjust="spacingAndGlyphs">10 Jul 13:00</text>
<text x="898" y="912" textLength="50" lengthAdjust="spacingAndGlyphs">11 Jul 05:00</text>
</g>
</svg>
</body>
</html>
